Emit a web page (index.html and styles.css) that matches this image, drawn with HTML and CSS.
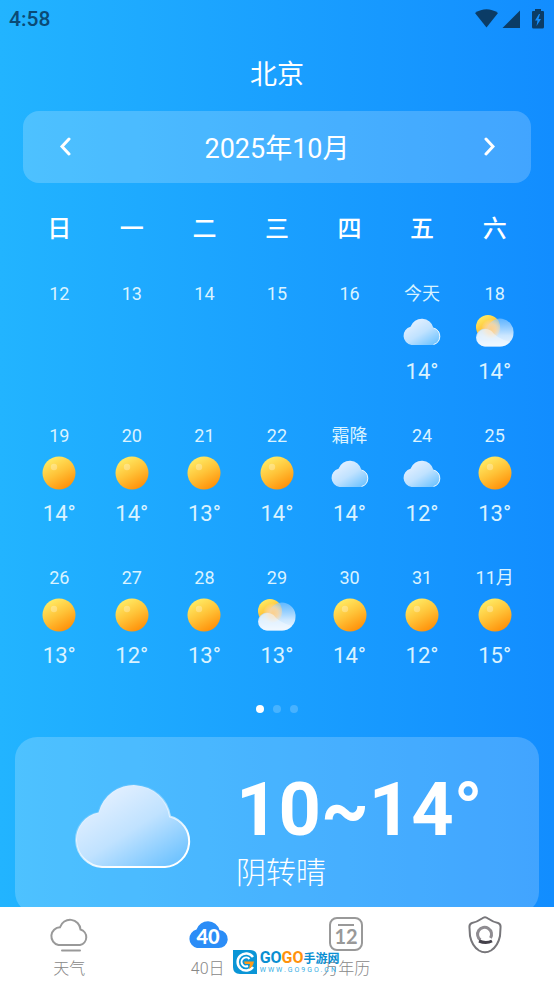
FILE: index.html
```html
<!DOCTYPE html>
<html lang="zh-CN">
<head>
<meta charset="UTF-8" />
<meta name="viewport" content="width=device-width, initial-scale=1" />
<title>北京 40日天气</title>
<link rel="stylesheet" href="styles.css">
</head>
<body>

<!-- shared icons -->
<svg class="sprite" aria-hidden="true">
  <defs>
    <linearGradient id="sun-fill" x1="0.2" y1="0" x2="0.75" y2="1">
      <stop offset="0" stop-color="#fff06a" />
      <stop offset="0.5" stop-color="#ffc338" />
      <stop offset="1" stop-color="#ff8c05" />
    </linearGradient>
    <linearGradient id="cloud-fill" x1="0.2" y1="0.1" x2="0.9" y2="0.9">
      <stop offset="0" stop-color="#e4f0ff" />
      <stop offset="0.5" stop-color="#c0e2ff" />
      <stop offset="1" stop-color="#72c4ff" />
    </linearGradient>
    <linearGradient id="cloud-edge" x1="0.2" y1="0" x2="0.8" y2="1">
      <stop offset="0.2" stop-color="#fff" stop-opacity="0.1" />
      <stop offset="0.8" stop-color="#fff" />
    </linearGradient>
    <linearGradient id="haze-fill" x1="0" y1="0" x2="0" y2="1">
      <stop offset="0" stop-color="#8ac8ff" stop-opacity="0.65" />
      <stop offset="0.6" stop-color="#d3eaff" stop-opacity="0.95" />
      <stop offset="1" stop-color="#f2f8ff" />
    </linearGradient>
    <radialGradient id="glow-fill">
      <stop offset="0" stop-color="#ffd089" stop-opacity="0.95" />
      <stop offset="0.5" stop-color="#ffd69b" stop-opacity="0.8" />
      <stop offset="1" stop-color="#ffe0b5" stop-opacity="0" />
    </radialGradient>
  </defs>
  <symbol id="sun" viewBox="0 0 40 34">
    <circle cx="20" cy="17" r="16.5" fill="url(#sun-fill)" />
    <circle cx="15" cy="11" r="3.2" fill="#fff" opacity="0.28" />
  </symbol>
  <symbol id="cloud" viewBox="0 0 118 84">
    <path d="M29 83 A27.500 27.500 0 0 1 25.500 28.500 A36.500 36.500 0 0 1 97 32.500 A25.700 25.700 0 0 1 92 83 Z" fill="url(#cloud-fill)" stroke="url(#cloud-edge)" stroke-width="2" />
  </symbol>
  <symbol id="cloud-small" viewBox="0 0 40 34">
    <path d="M9.500 31 A9.300 9.300 0 0 1 8.500 12.800 A12 12 0 0 1 31.500 14 A8.600 8.600 0 0 1 30.500 31 Z" fill="url(#cloud-fill)" />
    <path d="M31.500 14 A8.600 8.600 0 0 1 31.500 30.500" fill="none" stroke="#e6f5ff" stroke-width="1" />
  </symbol>
  <symbol id="partly" viewBox="0 0 40 34">
    <circle cx="13" cy="13" r="12" fill="url(#sun-fill)" />
    <path d="M10 32.500 A9 9 0 0 1 10 14.500 Q11 14.300 12 14.500 A13.500 13.500 0 0 1 38.500 19 A13.500 13.500 0 0 1 25 32.500 Z" fill="url(#haze-fill)" />
    <circle cx="16" cy="15" r="10" fill="url(#glow-fill)" />
    <path d="M10 32.500 A8.800 8.800 0 1 1 16.500 17 Q21 24 35 28 Q31 32.500 25 32.500 Z" fill="#f0f7ff" opacity="0.55" />
  </symbol>
</svg>

<main class="screen">
  <div class="status-bar">
    <span class="clock">4:58</span>
    <svg class="status-icons" viewBox="0 0 70 20" aria-hidden="true">
      <path d="M0 4 Q11.500 -3.500 23 4 L11.500 18.500 Z" />
      <path d="M45 1.500 V19 H27.500 Z" />
      <path fill-rule="evenodd" d="M60 0 H66 V2 H68 Q69 2 69 3 V18 Q69 19.500 67.500 19.500 H58.500 Q57 19.500 57 18 V3 Q57 2 58 2 H60 Z M64 5 L60 11.500 H62.500 L61.500 17 L66 10 H63.500 L65 5 Z" />
    </svg>
  </div>

  <h1 class="city">北京</h1>

  <div class="month-bar">
    <button class="month-btn" type="button" aria-label="上个月">
      <svg viewBox="0 0 12 20"><path d="M10 3 L3 10.500 L10 18" /></svg>
    </button>
    <h2 class="month">2025年10月</h2>
    <button class="month-btn" type="button" aria-label="下个月">
      <svg viewBox="0 0 12 20"><path d="M3 3 L10 10.500 L3 18" /></svg>
    </button>
  </div>

  <table class="calendar">
    <thead>
      <tr><th>日</th><th>一</th><th>二</th><th>三</th><th>四</th><th>五</th><th>六</th></tr>
    </thead>
    <tbody>
      <tr>
        <td><p class="date">12</p></td>
        <td><p class="date">13</p></td>
        <td><p class="date">14</p></td>
        <td><p class="date">15</p></td>
        <td><p class="date">16</p></td>
        <td><p class="date">今天</p><svg class="icon"><use href="#cloud-small" /></svg><p class="temp">14°</p></td>
        <td><p class="date">18</p><svg class="icon"><use href="#partly" /></svg><p class="temp">14°</p></td>
      </tr>
      <tr>
        <td><p class="date">19</p><svg class="icon"><use href="#sun" /></svg><p class="temp">14°</p></td>
        <td><p class="date">20</p><svg class="icon"><use href="#sun" /></svg><p class="temp">14°</p></td>
        <td><p class="date">21</p><svg class="icon"><use href="#sun" /></svg><p class="temp">13°</p></td>
        <td><p class="date">22</p><svg class="icon"><use href="#sun" /></svg><p class="temp">14°</p></td>
        <td><p class="date">霜降</p><svg class="icon"><use href="#cloud-small" /></svg><p class="temp">14°</p></td>
        <td><p class="date">24</p><svg class="icon"><use href="#cloud-small" /></svg><p class="temp">12°</p></td>
        <td><p class="date">25</p><svg class="icon"><use href="#sun" /></svg><p class="temp">13°</p></td>
      </tr>
      <tr>
        <td><p class="date">26</p><svg class="icon"><use href="#sun" /></svg><p class="temp">13°</p></td>
        <td><p class="date">27</p><svg class="icon"><use href="#sun" /></svg><p class="temp">12°</p></td>
        <td><p class="date">28</p><svg class="icon"><use href="#sun" /></svg><p class="temp">13°</p></td>
        <td><p class="date">29</p><svg class="icon"><use href="#partly" /></svg><p class="temp">13°</p></td>
        <td><p class="date">30</p><svg class="icon"><use href="#sun" /></svg><p class="temp">14°</p></td>
        <td><p class="date">31</p><svg class="icon"><use href="#sun" /></svg><p class="temp">12°</p></td>
        <td><p class="date">11月</p><svg class="icon"><use href="#sun" /></svg><p class="temp">15°</p></td>
      </tr>
    </tbody>
  </table>

  <div class="dots">
    <span class="dot active"></span>
    <span class="dot"></span>
    <span class="dot"></span>
  </div>

  <section class="detail">
    <svg class="detail-icon" aria-hidden="true"><use href="#cloud" /></svg>
    <div class="detail-text">
      <p class="range">10~14°</p>
      <p class="weather">阴转晴</p>
    </div>
  </section>
</main>

<nav class="tabs">
  <a class="tab" href="#weather">
    <svg class="tab-icon" viewBox="0 0 42 38" fill="none" stroke="#999" stroke-width="2" stroke-linecap="round">
      <path d="M10.500 29 A9 9 0 0 1 12 11.200 A10.500 10.500 0 0 1 32.500 13.500 A8 8 0 0 1 32 29 Z" />
      <path d="M14 34.500 H32" />
    </svg>
    <span>天气</span>
  </a>
  <a class="tab" href="#days">
    <svg class="tab-icon" viewBox="0 0 42 38">
      <path d="M10 32 A9.500 9.500 0 0 1 9.500 13.500 A12 12 0 0 1 32.500 14 A9 9 0 0 1 31 32 Z" fill="#2b8df7" />
      <text class="forty" x="21" y="28">40</text>
    </svg>
    <span>40日</span>
  </a>
  <a class="tab" href="#almanac">
    <svg class="tab-icon" viewBox="0 0 42 38">
      <rect x="5" y="2" width="32" height="32" rx="7" fill="none" stroke="#999" stroke-width="2" />
      <path d="M13 9 H29" stroke="#999" stroke-width="2" />
      <text class="twelve" x="21" y="28">12</text>
    </svg>
    <span>万年历</span>
  </a>
  <a class="tab" href="#me" aria-label="我的">
    <svg class="tab-icon" viewBox="0 0 42 38" fill="none" stroke="#77767a" stroke-width="2">
      <path d="M18 2.500 Q21 0 24 2.500 Q29 6 34 7 Q37 8 36.500 12 L36 20 Q34 30 27 34.500 Q21 38 15 34.500 Q8 30 6 20 L5.500 12 Q5 8 8 7 Q13 6 18 2.500 Z" />
      <path d="M16.500 24 A7 7 0 1 1 26.500 22" stroke="#8f8c91" stroke-width="3" />
      <path d="M15 25 Q22 28 28 25" stroke="#44414a" stroke-width="3" />
    </svg>
  </a>

  <div class="watermark">
    <svg class="mark" viewBox="0 0 24 24" aria-hidden="true">
      <path d="M0 0 H17 Q24 0 24 7 V24 H7 Q0 24 0 17 Z" fill="#0a95d6" />
      <path d="M20 7 A8.500 8.500 0 1 0 20 17" fill="none" stroke="#fff" stroke-width="2.500" />
      <path d="M16.500 9 A4.500 4.500 0 1 0 15 16" fill="none" stroke="#fff" stroke-width="2" />
      <path d="M11 11.500 H21 Q20 17 16 19 L17 14 H12 Z" fill="#ff9a1a" />
    </svg>
    <div>
      <p class="brand"><b class="blue">GO</b><b class="orange">GO</b><b class="cn">手游网</b></p>
      <p class="site">WWW.GO9GO.CN</p>
    </div>
  </div>
</nav>

</body>
</html>
```

FILE: styles.css
```css
*, *::before, *::after {
  box-sizing: border-box;
  margin: 0; padding: 0;
}
body {
  display: flex;
  flex-direction: column;
  height: 100vh;
  font-family: Roboto, "Noto Sans CJK SC", sans-serif;
  background: linear-gradient(to right, #22b4ff, #1aa0ff 50%, #128dff);
  color: #fff;
}
.sprite {
  position: absolute;
  width: 0;
  height: 0;
}
.screen {
  flex: 1;
  min-height: 0;
  overflow-y: auto;
  scrollbar-width: none;
}

.status-bar {
  display: flex;
  justify-content: space-between;
  align-items: center;
  height: 38px;
  padding: 0 9px;
  color: #0b4a75;
}
.clock {
  font-size: 21px;
  font-weight: 500;
}
.status-icons {
  width: 70px;
  height: 20px;
  fill: #0b3c66;
}
.city {
  height: 73px;
  font-size: 27px;
  font-weight: 400;
  line-height: 74px;
  text-align: center;
}

.month-bar {
  display: flex;
  justify-content: space-between;
  align-items: center;
  height: 72px;
  margin: 0 23px;
  padding: 0 24px;
  border-radius: 16px;
  background: rgba(255, 255, 255, 0.2);
}
.month {
  padding-top: 3px;
  font-size: 27px;
  font-weight: 400;
  line-height: 72px;
}
.month-btn {
  width: 36px;
  height: 48px;
  border: none;
  background: none;
  cursor: pointer;
}
.month-btn svg {
  width: 12px;
  height: 20px;
  fill: none;
  stroke: #fff;
  stroke-width: 3;
  stroke-linecap: round;
}

.calendar {
  width: calc(100% - 46px);
  margin: 0 23px;
  table-layout: fixed;
  border-collapse: collapse;
  text-align: center;
}
.calendar th {
  height: 92px;
  padding-bottom: 5px;
  font-size: 24px;
  font-weight: 500;
}
.calendar td {
  height: 142px;
  padding-top: 5px;
  vertical-align: top;
}
.date {
  font-size: 18px;
  line-height: 28px;
  color: #daf3ff;
}
.icon {
  display: block;
  width: 40px;
  height: 34px;
  margin: 6px auto 10px;
}
.temp {
  font-size: 22px;
  line-height: 28px;
  color: #daf3ff;
}

.dots {
  display: flex;
  justify-content: center;
  gap: 9px;
  padding: 4px 0 24px;
}
.dot {
  width: 8px;
  height: 8px;
  border-radius: 50%;
  background: rgba(255, 255, 255, 0.2);
}
.dot.active {
  background: #fff;
}

.detail {
  display: flex;
  gap: 45px;
  align-items: center;
  height: 177px;
  margin: 0 15px 20px;
  padding-left: 58px;
  border-radius: 22px;
  background: rgba(255, 255, 255, 0.2);
}
.detail-icon {
  width: 118px;
  height: 84px;
}
.detail-text {
  padding-top: 14px;
}
.range {
  font-size: 74px;
  font-weight: 700;
  line-height: 80px;
}
.weather {
  font-size: 30px;
  font-weight: 300;
  line-height: 46px;
}

.tabs {
  position: relative;
  display: flex;
  height: 77px;
  background: #fff;
}
.tab {
  display: flex;
  flex: 1;
  flex-direction: column;
  align-items: center;
  padding-top: 9px;
  font-size: 16px;
  font-weight: 300;
  line-height: 30px;
  color: #888;
  text-decoration: none;
}
.tab-icon {
  width: 42px;
  height: 38px;
}
.forty, .twelve {
  font-family: Lato, sans-serif;
  font-size: 20px;
  font-weight: 900;
  text-anchor: middle;
  fill: #fff;
}
.twelve {
  font-weight: 700;
  fill: #999;
}

/* site badge over the tabs */
.watermark {
  position: absolute;
  left: 42%;
  bottom: 10px;
  display: flex;
  gap: 3px;
  align-items: center;
}
.mark {
  width: 24px;
  height: 24px;
}
.brand {
  display: flex;
  align-items: center;
  height: 17px;
  font-size: 16px;
}
.blue, .cn {
  color: #0b8fd2;
}
.orange {
  color: #ff920d;
}
.cn {
  font-size: 12px;
}
.site {
  font-size: 7px;
  line-height: 8px;
  letter-spacing: 2px;
  color: #35aee5;
}
```
